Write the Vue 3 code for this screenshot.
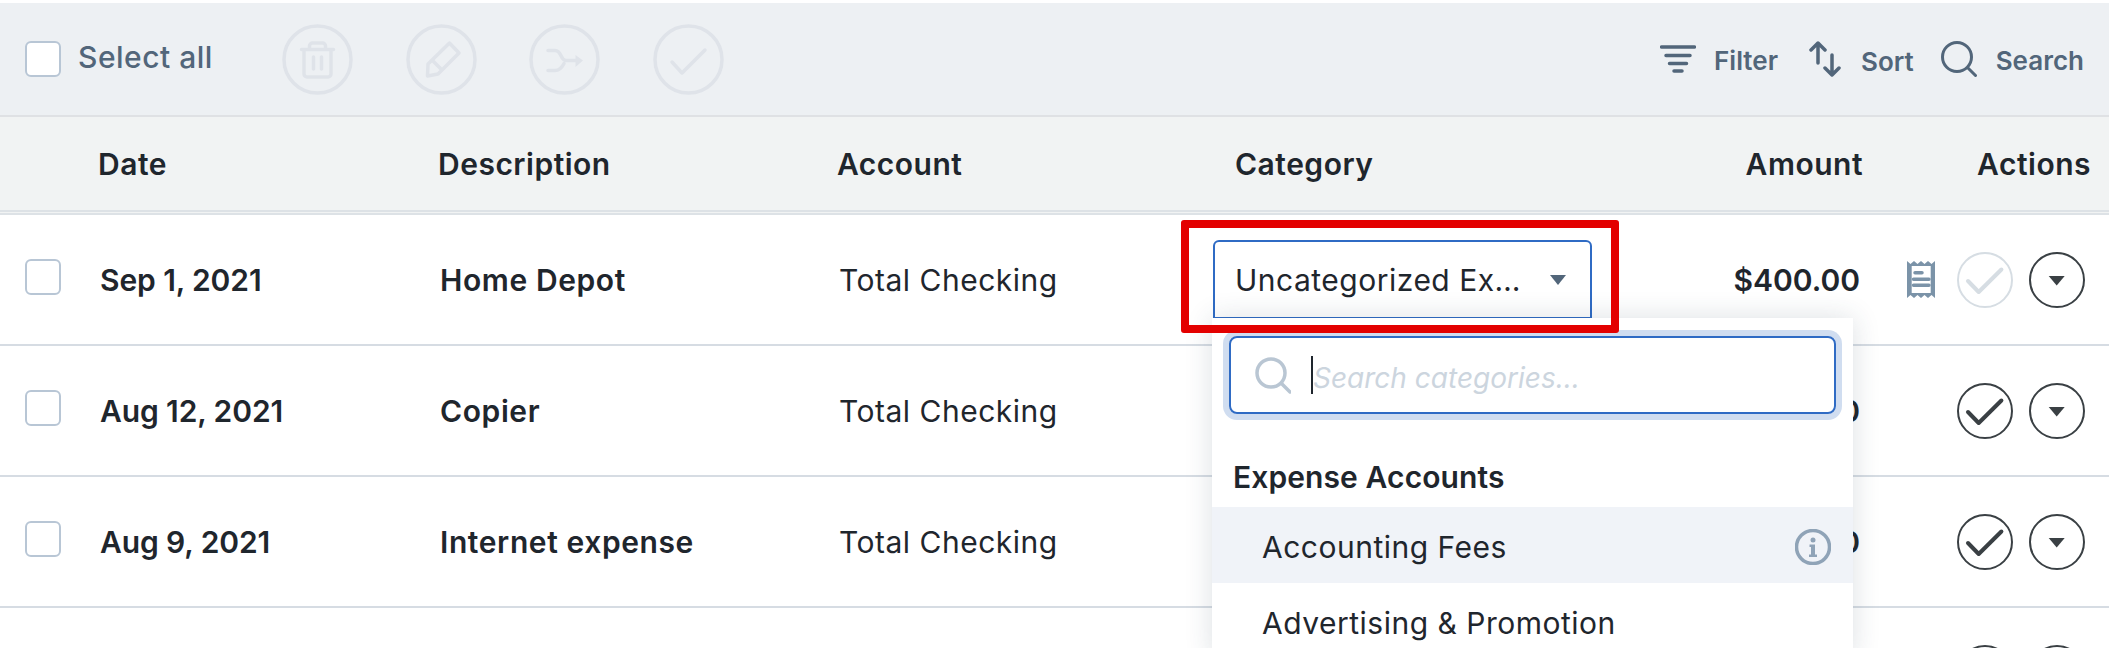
<template>
  <div class="page">
    <div class="toolbar">
      <label class="select-all">
        <span class="checkbox"></span>
        <span class="select-label">Select all</span>
      </label>
      <div class="bulk-actions">
        <button class="bulk-btn">
          <svg width="71" height="71" viewBox="0 0 71 71" fill="none" stroke="#dfe3e9" stroke-width="3.500" stroke-linecap="round" stroke-linejoin="round">
            <circle cx="35.5" cy="35.5" r="33.500" />
            <path d="M19.500 25.500h32M27.500 25v-3a3 3 0 0 1 3-3h10a3 3 0 0 1 3 3v3M22 26v24a3 3 0 0 0 3 3h21a3 3 0 0 0 3-3V26M31.500 33v12M39.500 33v12" />
          </svg>
        </button>
        <button class="bulk-btn">
          <svg width="71" height="71" viewBox="0 0 71 71" fill="none" stroke="#dfe3e9" stroke-width="3.500" stroke-linejoin="round">
            <circle cx="35.5" cy="35.5" r="33.500" />
            <path d="M43.500 19l9.500 10-21 21-10.500 2 .5-12zM26 36l10 10" />
          </svg>
        </button>
        <button class="bulk-btn">
          <svg width="71" height="71" viewBox="0 0 71 71" fill="none" stroke="#dfe3e9" stroke-width="3.500" stroke-linecap="round">
            <circle cx="35.5" cy="35.5" r="33.500" />
            <path d="M19 26.500h7c7 0 5 10 11 10h10M19 46.500h7c5 0 7-3 9-7" />
            <path d="M46.500 31l7.500 5.500-7.500 6.500z" fill="#dfe3e9" stroke="none" />
          </svg>
        </button>
        <button class="bulk-btn">
          <svg width="71" height="71" viewBox="0 0 71 71" fill="none" stroke="#dfe3e9" stroke-width="3.500" stroke-linecap="round" stroke-linejoin="round">
            <circle cx="35.5" cy="35.5" r="33.500" />
            <path d="M19 38l10 11 23-23" />
          </svg>
        </button>
      </div>
      <div class="tools">
        <span class="tool tool-filter">
          <svg width="36" height="28" viewBox="0 0 36 28" fill="none" stroke="#52667a" stroke-width="3.500" stroke-linecap="round">
            <path d="M1.500 2h33M6 10.500h24M9.500 18.500h17M14 26h8" />
          </svg>
          <span>Filter</span>
        </span>
        <span class="tool tool-sort">
          <svg width="32" height="36" viewBox="0 0 32 36" fill="none" stroke="#52667a" stroke-width="3.500" stroke-linecap="round" stroke-linejoin="round">
            <path d="M9 2v20M2 9l7-7 7 7M23 14v20M16 27l7 7 7-7" />
          </svg>
          <span class="sort-label">Sort</span>
        </span>
        <span class="tool tool-search">
          <svg width="36" height="36" viewBox="0 0 36 36" fill="none" stroke="#52667a" stroke-width="3" stroke-linecap="round">
            <circle cx="16" cy="16" r="14.500" />
            <path d="M27 27l7.500 7.500" />
          </svg>
          <span>Search</span>
        </span>
      </div>
    </div>

    <div class="table-head">
      <span>Date</span>
      <span>Description</span>
      <span>Account</span>
      <span>Category</span>
      <span class="right">Amount</span>
      <span class="right">Actions</span>
    </div>

    <div v-for="(row, index) in rows" :key="index" class="row">
      <span class="checkbox row-check"></span>
      <span class="date">{{ row.date }}</span>
      <span class="desc">{{ row.description }}</span>
      <span class="account">{{ row.account }}</span>
      <span class="category">
        <span v-if="index === 0" class="select">
          <span class="select-text">Uncategorized Expenses</span>
          <i class="caret"></i>
        </span>
      </span>
      <span class="amount">{{ row.amount }}</span>
      <span class="actions">
        <svg v-if="index === 0" class="receipt" width="28" height="37" viewBox="0 0 28 37">
          <path d="M0 0l3.500 3 3.500-3 3.500 3L14 0l3.500 3L21 0l3.500 3L28 0v37l-3.500-3-3.500 3-3.500-3-3.500 3-3.500-3L7 37l-3.500-3L0 37z" fill="#7b93a8" />
          <rect x="4.700" y="5" width="19" height="27" fill="#fff" />
          <path d="M8 11.700h7M6.500 18.300H22M6.500 24.300H22" stroke="#7b93a8" stroke-width="3.500" stroke-linecap="round" />
        </svg>
        <button class="circle" :class="{ muted: index === 0 }">
          <svg width="56" height="56" viewBox="0 0 56 56" fill="none" stroke="currentColor" stroke-linecap="round" stroke-linejoin="round">
            <circle cx="28" cy="28" r="27" stroke-width="2" />
            <path d="M11 29l10.700 11 22.700-22.500" stroke-width="4" />
          </svg>
        </button>
        <button class="circle">
          <svg width="56" height="56" viewBox="0 0 56 56" fill="none" stroke="currentColor">
            <circle cx="28" cy="28" r="27" stroke-width="2" />
            <path d="M19.700 24h16l-8 9.500z" fill="currentColor" stroke="none" />
          </svg>
        </button>
      </span>
    </div>

    <div class="menu">
      <div class="menu-search">
        <svg width="36" height="37" viewBox="0 0 36 37" fill="none" stroke="#b9c6d3" stroke-width="3.500" stroke-linecap="round">
          <circle cx="16" cy="16" r="14" />
          <path d="M27 27l8 8" />
        </svg>
        <span class="text-cursor"></span>
        <span class="placeholder">Search categories...</span>
      </div>
      <div class="menu-group">Expense Accounts</div>
      <div class="menu-item active">
        Accounting Fees
        <svg width="36" height="36" viewBox="0 0 36 36" fill="none">
          <circle cx="18" cy="18" r="16.500" stroke="#8fa3b7" stroke-width="3.500" />
          <circle cx="18" cy="11" r="2.500" fill="#8fa3b7" />
          <path d="M14.500 15.500h5.500v10h2v2.500h-8v-2.500h2v-7.500h-1.500z" fill="#8fa3b7" />
        </svg>
      </div>
      <div class="menu-item">Advertising &amp; Promotion</div>
    </div>

    <div class="highlight"></div>
  </div>
</template>

<script setup>
const rows = [
  { date: 'Sep 1, 2021', description: 'Home Depot', account: 'Total Checking', amount: '$400.00' },
  { date: 'Aug 12, 2021', description: 'Copier', account: 'Total Checking', amount: '$120.00' },
  { date: 'Aug 9, 2021', description: 'Internet expense', account: 'Total Checking', amount: '$60.00' },
  { date: 'Aug 2, 2021', description: 'Office supplies', account: 'Total Checking', amount: '$85.00' },
];
</script>

<style>
html,
body {
  height: 100%;
  margin: 0;
  overflow: hidden;
  background: #fff;
}
</style>

<style scoped>
.page {
  position: relative;
  height: 648px;
  overflow: hidden;
  padding-top: 3px;
  box-sizing: border-box;
  font-family: Inter, "Liberation Sans", sans-serif;
  font-size: 30px;
  color: #1f262d;
}

button {
  padding: 0;
  border: 0;
  background: none;
  display: block;
  line-height: 0;
}

.toolbar {
  display: flex;
  align-items: center;
  height: 112px;
  padding: 0 25px;
  background: #edf0f3;
  border-bottom: 2px solid #dfe1e4;
}

.checkbox {
  display: block;
  width: 36px;
  height: 36px;
  box-sizing: border-box;
  border: 2px solid #b8c6d5;
  border-radius: 6px;
  background: #fff;
}

.select-all {
  display: flex;
  align-items: center;
  gap: 17px;
  width: 257px;
  font-size: 30px;
  font-weight: 500;
  letter-spacing: 0.5px;
  color: #52667a;
}

.select-label {
  margin-top: -5px;
}

.bulk-actions {
  display: flex;
  gap: 52.5px;
}

.tools {
  display: flex;
  align-items: center;
  margin-left: auto;
  font-size: 26px;
  font-weight: 600;
  color: #52667a;
}

.tool {
  display: flex;
  align-items: center;
  gap: 19px;
}

.tool-filter {
  gap: 18px;
}

.tool span {
  margin-top: 2px;
}

.tool-sort {
  gap: 20px;
  margin-left: 31px;
}

.tool .sort-label {
  margin-top: 5px;
}

.tool-search {
  margin-left: 27px;
}

.table-head {
  display: grid;
  grid-template-columns: 340px 399px 398px 425px 203px 1fr;
  align-items: center;
  height: 93px;
  padding: 0 18px 0 98px;
  background: #f1f3f3;
  border-bottom: 5px double #dde2e6;
  font-weight: 600;
  letter-spacing: 0.5px;
}

.right {
  text-align: right;
}

.row {
  display: grid;
  grid-template-columns: 75px 340px 399px 374px 379px 268px 1fr;
  align-items: center;
  height: 131px;
  box-sizing: border-box;
  padding-left: 25px;
  border-bottom: 2px solid #d6dce3;
}

.row-check {
  margin-top: -5px;
}

.date {
  font-weight: 600;
  letter-spacing: -0.1px;
}

.desc {
  font-weight: 600;
  letter-spacing: 0.6px;
}

.account {
  letter-spacing: 0.5px;
}

.category {
  min-height: 1px;
}

.select {
  display: flex;
  align-items: center;
  justify-content: space-between;
  width: 379px;
  height: 79px;
  box-sizing: border-box;
  padding: 0 24px 0 20px;
  border: 2px solid #2f6bc4;
  border-radius: 6px 6px 0 0;
  background: #fff;
  letter-spacing: 0.5px;
}

.select-text {
  width: 296px;
  overflow: hidden;
  white-space: nowrap;
  text-overflow: ellipsis;
}

.caret {
  display: block;
  width: 0;
  height: 0;
  border-left: 8px solid transparent;
  border-right: 8px solid transparent;
  border-top: 10px solid #52667a;
}

.amount {
  font-weight: 600;
  text-align: right;
}

.actions {
  display: flex;
  align-items: center;
  justify-content: flex-end;
  gap: 16px;
  padding-right: 24px;
}

.receipt {
  margin-right: 6px;
}

.circle {
  color: #3a4044;
}

.circle.muted {
  color: #d6dde3;
}

.menu {
  position: absolute;
  top: 318px;
  left: 1212px;
  width: 641px;
  height: 340px;
  background: #fff;
  box-shadow: 0 0 26px rgba(40, 60, 80, 0.16);
}

.menu-search {
  display: flex;
  align-items: center;
  height: 78px;
  box-sizing: border-box;
  margin: 18px 17px 0;
  padding-left: 24px;
  border: 2px solid #2f6bc4;
  border-radius: 8px;
  box-shadow: 0 0 0 6px #d0ddf0;
}

.text-cursor {
  width: 2px;
  height: 38px;
  margin-left: 20px;
  background: #1f262d;
}

.placeholder {
  margin-top: 5px;
  font-style: italic;
  font-size: 28px;
  color: #ccd5de;
}

.menu-group {
  margin: 43px 0 0 21px;
  line-height: 40px;
  font-weight: 600;
  letter-spacing: 0.1px;
}

.menu-item {
  display: flex;
  align-items: center;
  justify-content: space-between;
  height: 76px;
  box-sizing: border-box;
  padding: 3px 22px 0 50px;
  letter-spacing: 0.5px;
}

.menu-group + .menu-item {
  margin-top: 10px;
}

.menu-item.active {
  background: #f0f3f8;
}

.highlight {
  position: absolute;
  top: 220px;
  left: 1181px;
  width: 438px;
  height: 113px;
  box-sizing: border-box;
  border: 8px solid #e30000;
  border-radius: 3px;
}
</style>
